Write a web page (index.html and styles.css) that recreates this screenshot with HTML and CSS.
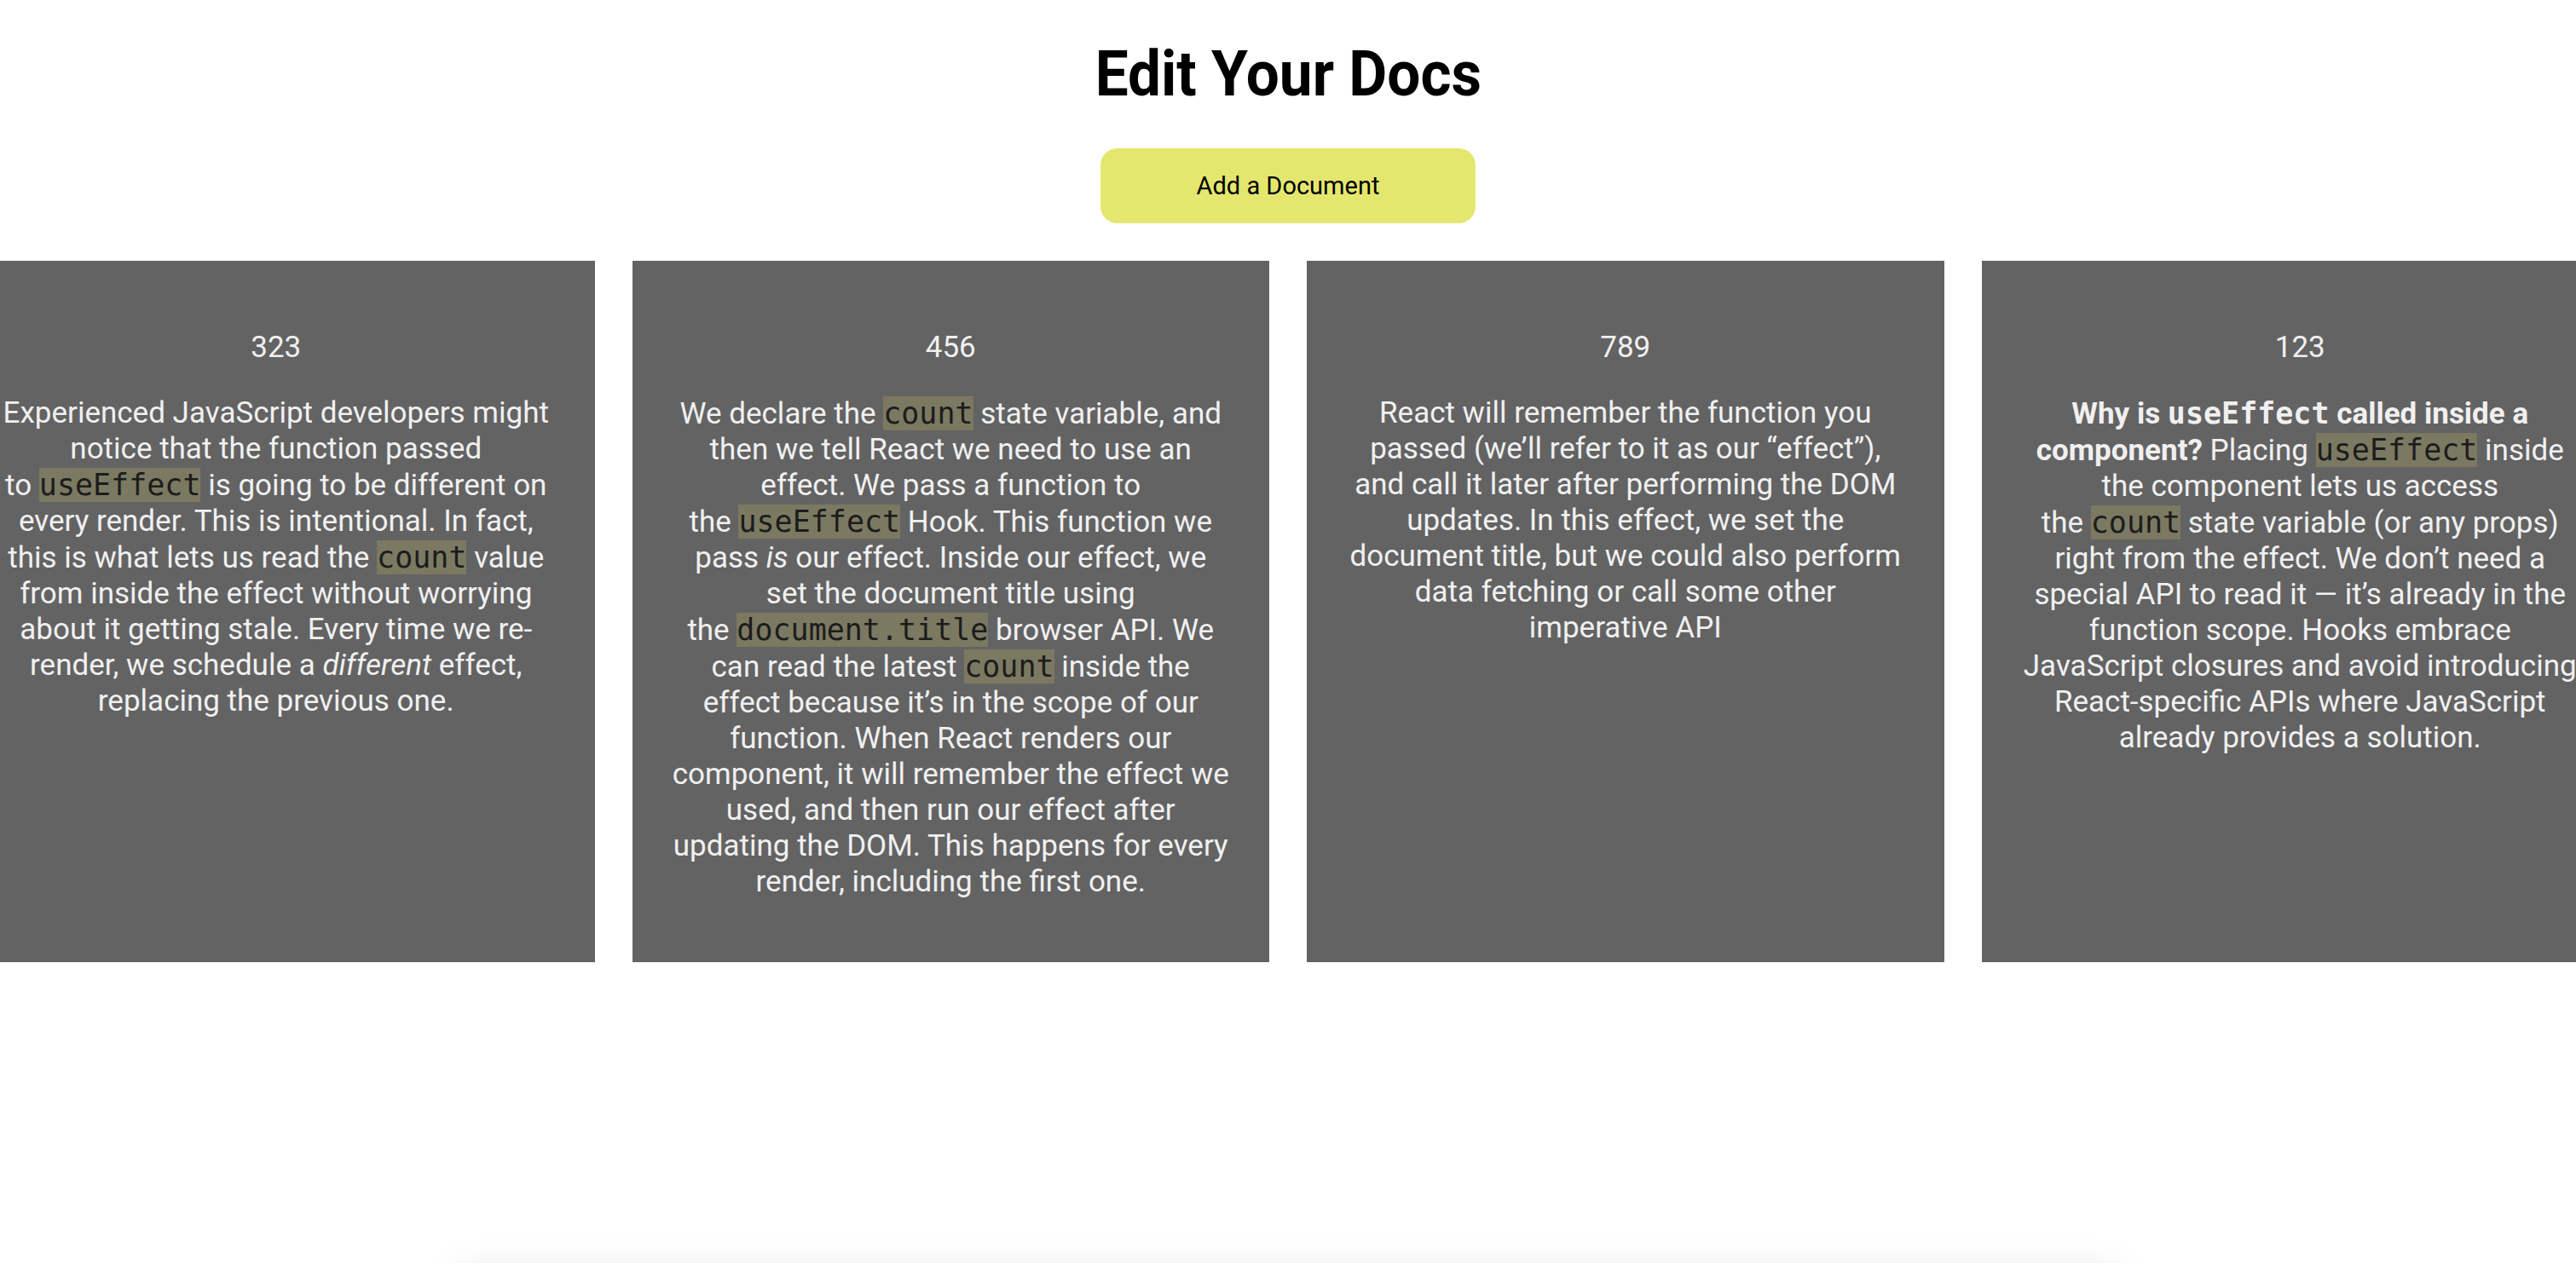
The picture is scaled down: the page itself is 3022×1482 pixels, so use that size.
FILE: index.html
```html
<!DOCTYPE html>
<html lang="en">
<head>
<meta charset="utf-8">
<title>Edit Your Docs</title>
<link rel="stylesheet" href="styles.css">
</head>
<body>
<div class="app">
  <h1 class="title">Edit Your Docs</h1>
  <button class="add-btn" type="button">Add a Document</button>
  <div class="docs">
    <article class="doc">
      <p class="doc-id">323</p>
      <p class="doc-text">Experienced JavaScript developers might notice that the function passed to&nbsp;<code class="hl">useEffect</code>&nbsp;is going to be different on every render. This is intentional. In fact, this is what lets us read the <code class="hl">count</code> value from inside the effect without worrying about it getting stale. Every time we re-render, we schedule a <em>different</em> effect, replacing the previous one.</p>
    </article>
    <article class="doc">
      <p class="doc-id">456</p>
      <p class="doc-text">We declare the <code class="hl">count</code> state variable, and then we tell React we need to use an effect. We pass a function to the&nbsp;<code class="hl">useEffect</code>&nbsp;Hook. This function we pass <em>is</em> our effect. Inside our effect, we set the document title using the&nbsp;<code class="hl">document.title</code>&nbsp;browser API. We can read the latest <code class="hl">count</code> inside the effect because it’s in the scope of our function. When React renders our component, it will remember the effect we used, and then run our effect after updating the DOM. This happens for every render, including the first one.</p>
    </article>
    <article class="doc">
      <p class="doc-id">789</p>
      <p class="doc-text">React will remember the function you passed (we’ll refer to it as our “effect”), and call it later after performing the DOM updates. In this effect, we set the document title, but we could also perform data fetching or call some other imperative API</p>
    </article>
    <article class="doc">
      <p class="doc-id">123</p>
      <p class="doc-text"><strong>Why is <code>useEffect</code> called inside a component?</strong> Placing <code class="hl">useEffect</code> inside the component lets us access the&nbsp;<code class="hl">count</code>&nbsp;state variable (or any props) right from the effect. We don’t need a special API to read it — it’s already in the function scope. Hooks embrace JavaScript closures and avoid introducing React-specific APIs where JavaScript already provides a solution.</p>
    </article>
  </div>
  <section class="editor"></section>
</div>
</body>
</html>
```

FILE: styles.css
```css
* {
  box-sizing: border-box;
}

html,
body {
  margin: 0;
  padding: 0;
  background: #ffffff;
}

body {
  font-family: Roboto, "Liberation Sans", Arial, sans-serif;
  color: #000000;
}

.app {
  height: 100vh;
  overflow: hidden;
  display: flex;
  flex-direction: column;
  align-items: center;
  padding-top: 42px;
}

.title {
  margin: 0;
  font-size: 75px;
  font-weight: 700;
  line-height: normal;
  color: #000000;
  transform: scaleX(0.924);
}

.add-btn {
  flex-shrink: 0;
  margin-top: 44px;
  width: 440px;
  height: 88px;
  border: 0;
  border-radius: 20px;
  background: #e4e76e;
  font-family: Roboto, "Liberation Sans", Arial, sans-serif;
  font-size: 29px;
  color: #000000;
  cursor: pointer;
}

.docs {
  flex-shrink: 0;
  margin-top: 44px;
  width: 100%;
  display: flex;
  justify-content: center;
  gap: 44px;
}

.doc {
  flex: 0 0 747.5px;
  height: 823px;
  background: #636363;
  padding: 46px 45.75px;
  text-align: center;
  color: #f0f0f0;
  font-size: 35px;
  line-height: 42px;
}

.doc p {
  margin: 35px 0;
}

code {
  font-family: "DejaVu Sans Mono", monospace;
  font-size: 1em;
}

.hl {
  background: #7b7961;
  color: #1c1c1c;
}

.editor {
  flex-shrink: 0;
  margin-top: 367px;
  width: 1960px;
  height: 400px;
  border-radius: 24px;
  background: #ffffff;
  box-shadow: 0 0 50px rgba(0, 0, 0, 0.12);
}
```
